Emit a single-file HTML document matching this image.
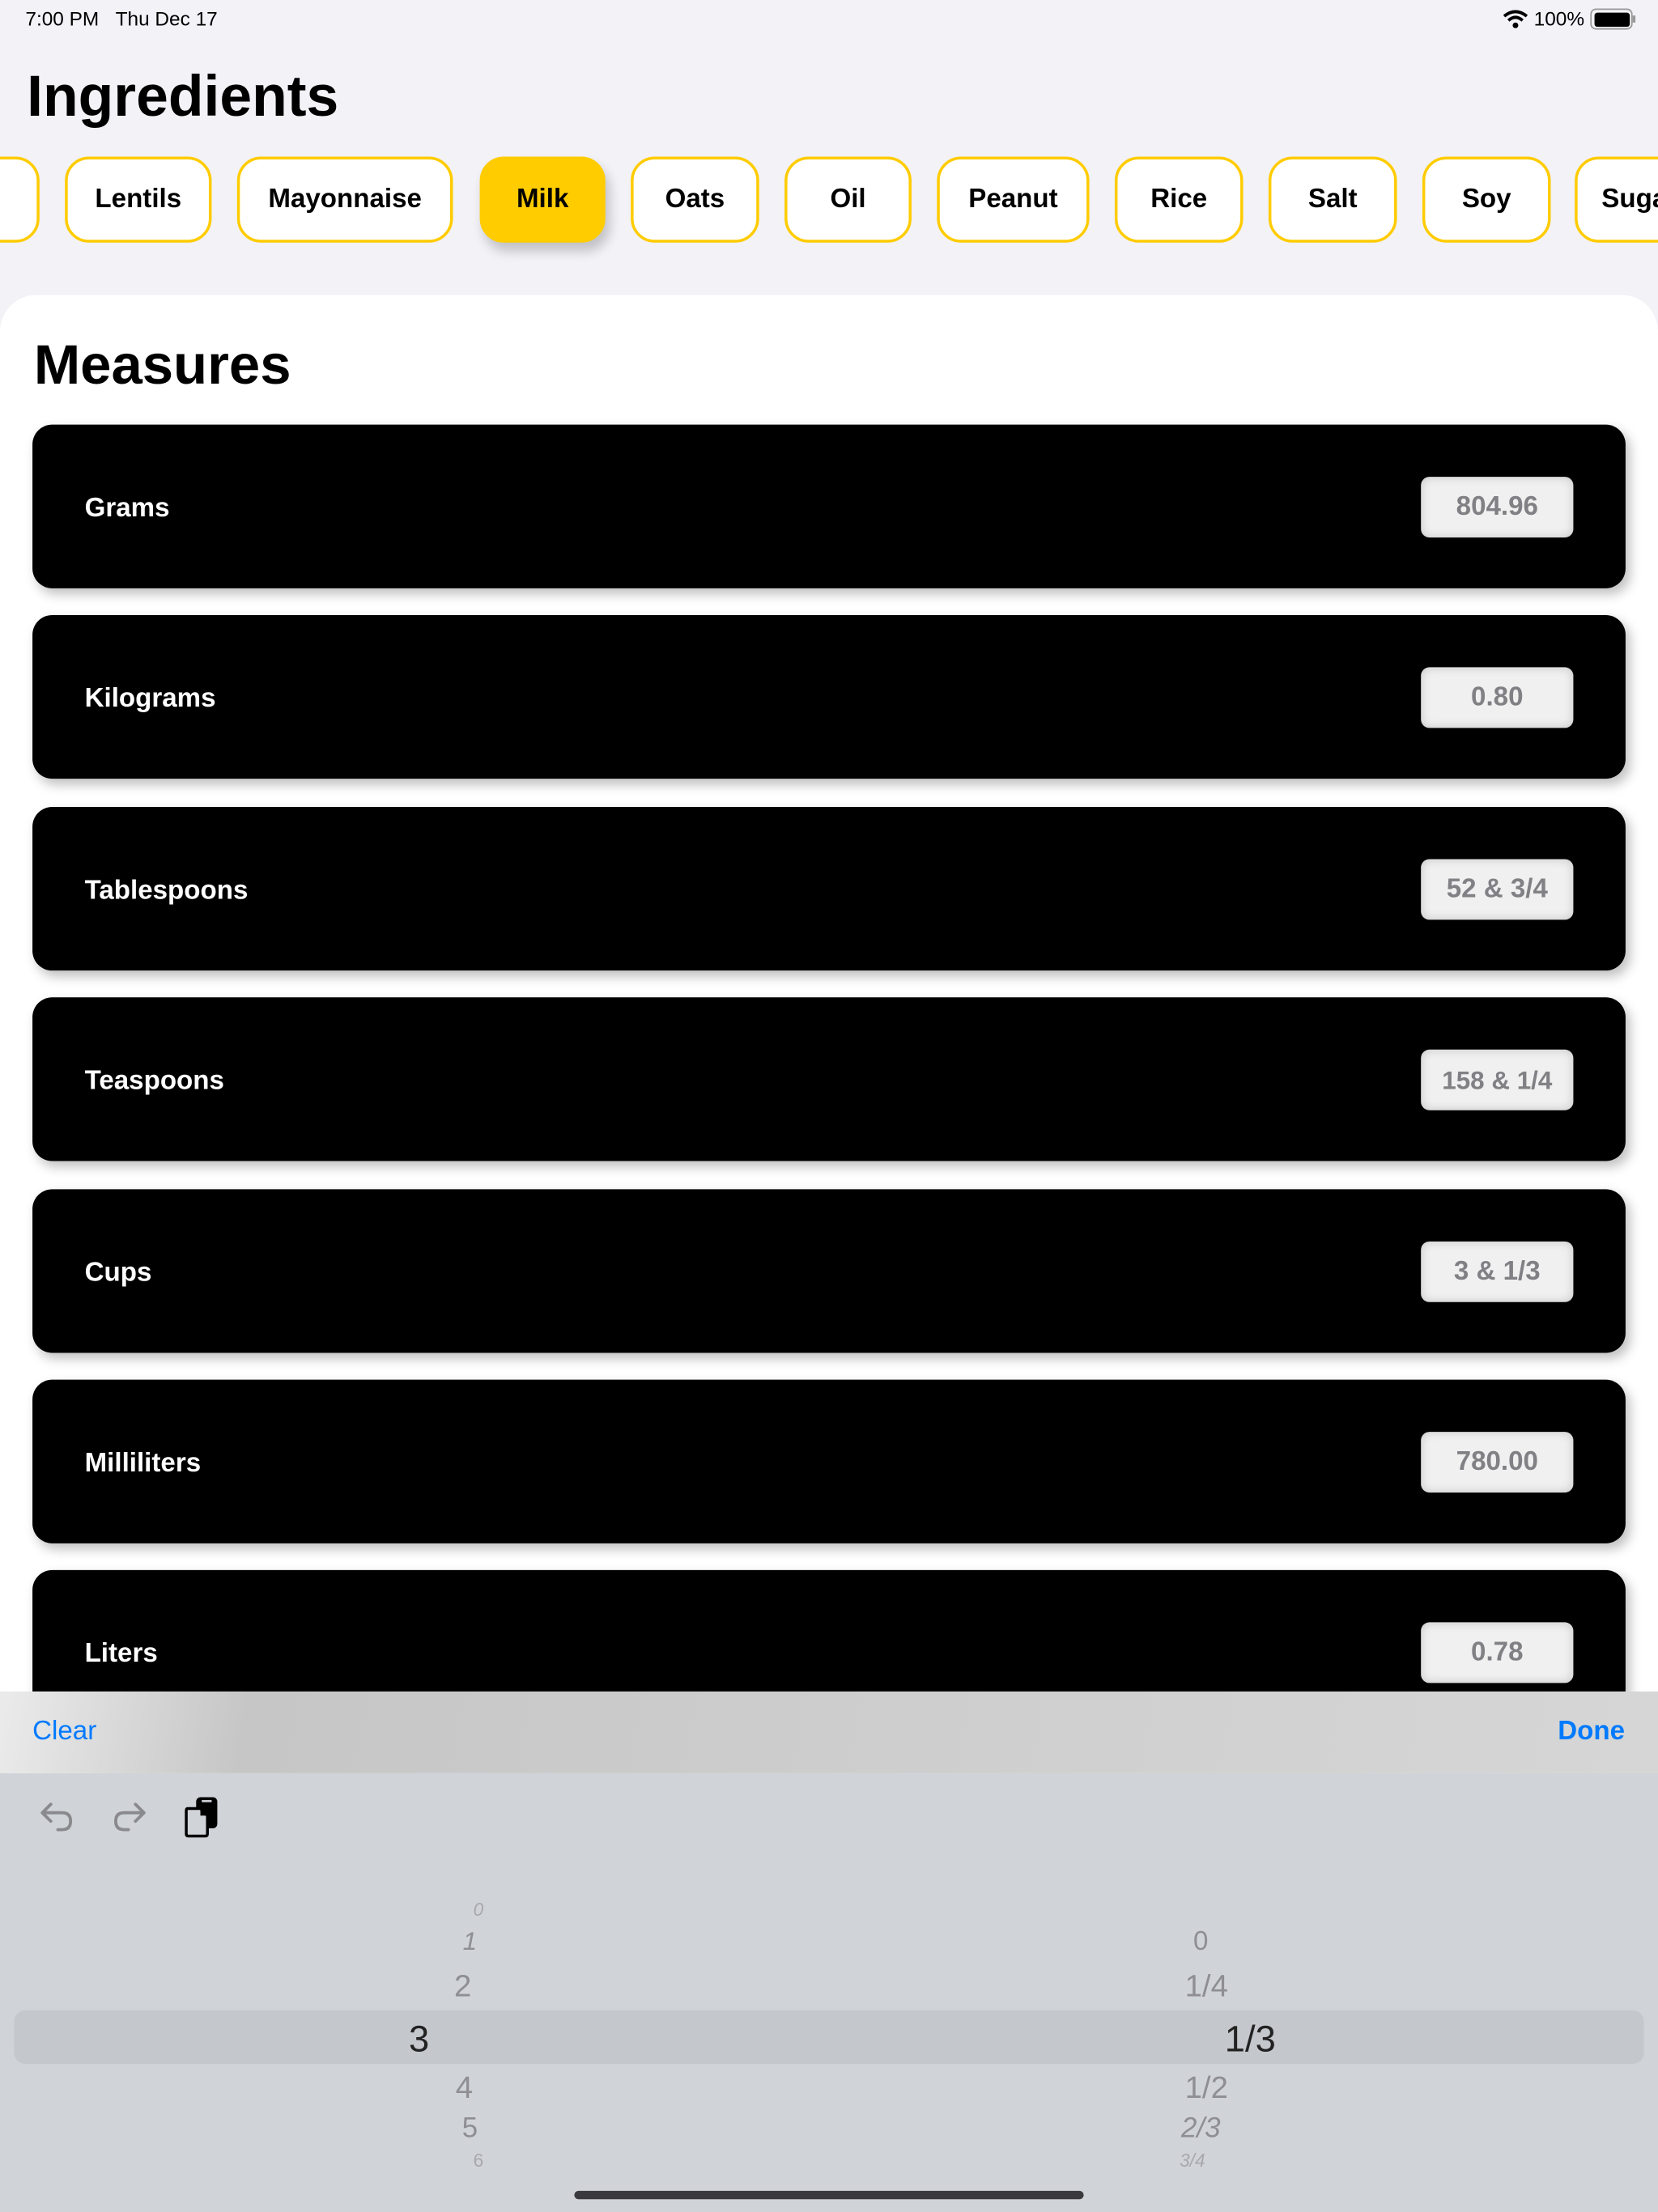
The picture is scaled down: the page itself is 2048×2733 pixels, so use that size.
<!DOCTYPE html>
<html><head><meta charset="utf-8"><style>
*{margin:0;padding:0;box-sizing:border-box}
html,body{width:2048px;height:2732px;overflow:hidden;background:#f2f2f7}
#w{position:absolute;left:0;top:0;width:1175px;height:1568px;transform:scale(1.74298);transform-origin:0 0;font-family:"Liberation Sans",sans-serif;background:#f2f2f7;overflow:hidden}
.a{position:absolute}
.chip{position:absolute;top:111px;height:61px;border:2.5px solid #ffcc00;border-radius:17px;background:#fff;font-weight:bold;font-size:19px;display:flex;align-items:center;justify-content:center;color:#000}
.row{position:absolute;left:23px;width:1129px;height:116px;background:#000;border-radius:14px;box-shadow:3px 4px 8px rgba(0,0,0,.25)}
.row .l{position:absolute;left:37px;top:2px;line-height:116px;color:#fff;font-weight:bold;font-size:19px}
.row .b{position:absolute;left:984px;top:37px;width:108px;height:43px;border-radius:6px;background:#f0f0f0;box-shadow:inset 0 0 7px rgba(0,0,0,.18);color:#818185;font-weight:bold;font-size:19px;display:flex;align-items:center;justify-content:center;padding-top:1px}
.p{position:absolute;color:#8e8e93;font-size:22px;transform:translateX(-50%)}
</style></head><body><div id="w">
<div class="a" style="left:18px;top:5px;font-size:14px;color:#000">7:00 PM&nbsp;&nbsp;&nbsp;Thu Dec 17</div>
<svg class="a" style="left:1065px;top:7px" width="18" height="13" viewBox="0 0 18 13"><path d="M1 4.5 Q9 -2 17 4.5" stroke="#000" stroke-width="2.2" fill="none"/><path d="M4 7.5 Q9 3 14 7.5" stroke="#000" stroke-width="2.2" fill="none"/><circle cx="9" cy="11" r="2" fill="#000"/></svg>
<div class="a" style="left:1087px;top:5px;font-size:14px">100%</div>
<div class="a" style="left:1127px;top:6px;width:30px;height:15px;border:1.5px solid #999;border-radius:4px;padding:1.5px"><div style="width:100%;height:100%;background:#000;border-radius:2px"></div></div>
<div class="a" style="left:1157px;top:11px;width:2px;height:5px;background:#999"></div>
<div class="a" style="left:19px;top:45px;font-size:41px;font-weight:bold">Ingredients</div>
<div class="chip" style="left:-60px;width:88px"></div>
<div class="chip" style="left:46px;width:104px">Lentils</div>
<div class="chip" style="left:168px;width:153px">Mayonnaise</div>
<div class="chip" style="left:340px;width:89px;background:#ffcc00;border-color:#ffcc00;box-shadow:3px 6px 8px rgba(0,0,0,.2)">Milk</div>
<div class="chip" style="left:447px;width:91px">Oats</div>
<div class="chip" style="left:556px;width:90px">Oil</div>
<div class="chip" style="left:664px;width:108px">Peanut</div>
<div class="chip" style="left:790px;width:91px">Rice</div>
<div class="chip" style="left:899px;width:91px">Salt</div>
<div class="chip" style="left:1008px;width:91px">Soy</div>
<div class="chip" style="left:1116px;width:100px;justify-content:flex-start;padding-left:17px">Sugar</div>
<div class="a" style="left:0;top:209px;width:1175px;height:1100px;background:#fff;border-radius:26px 26px 0 0"></div>
<div class="a" style="left:24px;top:237px;font-size:39.5px;font-weight:bold">Measures</div>
<div class="row" style="top:301px"><div class="l">Grams</div><div class="b">804.96</div></div>
<div class="row" style="top:436px"><div class="l">Kilograms</div><div class="b">0.80</div></div>
<div class="row" style="top:572px"><div class="l">Tablespoons</div><div class="b">52 &amp; 3/4</div></div>
<div class="row" style="top:707px"><div class="l">Teaspoons</div><div class="b" style="font-size:18px">158 &amp; 1/4</div></div>
<div class="row" style="top:843px"><div class="l">Cups</div><div class="b">3 &amp; 1/3</div></div>
<div class="row" style="top:978px"><div class="l">Milliliters</div><div class="b">780.00</div></div>
<div class="row" style="top:1113px"><div class="l">Liters</div><div class="b">0.78</div></div>
<div class="a" style="left:0;top:1199px;width:1175px;height:58px;background:linear-gradient(100deg,#ebebeb 0%,#c6c6c6 15%,#cfcfcf 60%,#d6d6d6 100%)"></div>
<div class="a" style="left:23px;top:1217px;font-size:19px;color:#007aff">Clear</div>
<div class="a" style="left:1104px;top:1217px;font-size:19px;color:#007aff;font-weight:bold">Done</div>
<div class="a" style="left:0;top:1257px;width:1175px;height:311px;background:#d0d3d8"></div>
<svg class="a" style="left:28px;top:1276px" width="26" height="26" viewBox="0 0 26 26"><path d="M8 3 L2 9 L8 15 M2 9 H16 Q22 9 22 15 Q22 21 16 21 H13" stroke="#8a8a8e" stroke-width="2.2" fill="none" stroke-linecap="round" stroke-linejoin="round"/></svg>
<svg class="a" style="left:78px;top:1276px" width="26" height="26" viewBox="0 0 26 26"><path d="M18 3 L24 9 L18 15 M24 9 H10 Q4 9 4 15 Q4 21 10 21 H13" stroke="#8a8a8e" stroke-width="2.2" fill="none" stroke-linecap="round" stroke-linejoin="round"/></svg>
<svg class="a" style="left:130px;top:1273px" width="26" height="30" viewBox="0 0 26 30"><rect x="9" y="1" width="15" height="22" rx="3" fill="#000"/><rect x="13" y="3" width="7" height="1.5" fill="#d0d3d8"/><path d="M3 9 H12 L17 14 V27 Q17 28.5 15.5 28.5 H3.5 Q2 28.5 2 27 V10.5 Q2 9 3 9Z" fill="#d0d3d8" stroke="#000" stroke-width="2"/><path d="M12 9 V14 H17Z" fill="#000"/></svg>
<div class="a" style="left:10px;top:1425px;width:1155px;height:38px;background:#c4c7cc;border-radius:8px"></div>
<div class="p" style="left:339px;top:1346px;font-size:13px;color:#a8a8ad;font-style:italic">0</div>
<div class="p" style="left:333px;top:1366px;font-size:18px;font-style:italic">1</div>
<div class="p" style="left:328px;top:1395px">2</div>
<div class="p" style="left:297px;top:1430px;font-size:26px;color:#222">3</div>
<div class="p" style="left:329px;top:1467px">4</div>
<div class="p" style="left:333px;top:1498px;font-size:20px">5</div>
<div class="p" style="left:339px;top:1524px;font-size:13px;color:#a8a8ad">6</div>
<div class="p" style="left:851px;top:1366px;font-size:19px">0</div>
<div class="p" style="left:855px;top:1395px">1/4</div>
<div class="p" style="left:886px;top:1430px;font-size:26px;color:#222">1/3</div>
<div class="p" style="left:855px;top:1467px">1/2</div>
<div class="p" style="left:851px;top:1498px;font-size:20px;font-style:italic">2/3</div>
<div class="p" style="left:845px;top:1524px;font-size:13px;color:#a8a8ad;font-style:italic">3/4</div>
<div class="a" style="left:407px;top:1553px;width:361px;height:6px;border-radius:3px;background:#3a3a3c"></div>
</div></body></html>
